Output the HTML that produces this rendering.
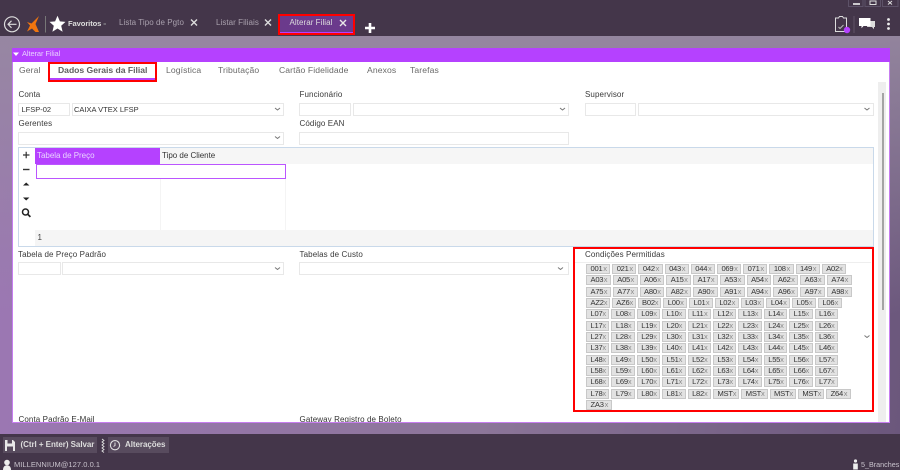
<!DOCTYPE html>
<html lang="pt"><head><meta charset="utf-8"><title>Alterar Filial</title>
<style>
*{box-sizing:border-box}
html,body{margin:0;padding:0;width:900px;height:470px;overflow:hidden;background:#44364a}
body{font-family:"Liberation Sans",sans-serif;font-size:8px;color:#444}
#w{position:relative;width:900px;height:470px;overflow:hidden;filter:blur(.3px)}
.a{position:absolute}
.t{position:absolute;white-space:nowrap;line-height:10px}
.l{color:#3a3a3a;font-size:8px;letter-spacing:.1px}
.i{position:absolute;background:#fff;border:1px solid #e8e8e8;height:13px}
.n{position:absolute;white-space:nowrap;font-size:8.6px;line-height:12px;top:64px;color:#6a6a6a;letter-spacing:.1px}
.r{position:absolute;border:2px solid #f00}
.row{position:absolute;left:586px;height:10px;display:flex;gap:2px}
.g{display:flex;justify-content:space-between;height:10px;width:23.4px;padding:0 2.5px 0 3.5px;background:#e2e2e2;border:1px solid #c8c8c8;color:#333;font-size:7.6px;line-height:8.5px;letter-spacing:-.25px}
.g i{font-style:normal;color:#8a8a8a;font-size:7.5px;line-height:8px}
.w1 .g{width:24.2px}.w2 .g{width:24.77px}.w4 .g{width:23.77px}
.g.m{width:26.3px}.g.z{width:24.6px}
</style></head><body><div id="w">
<div class="a" style="left:0;top:36px;width:900px;height:398px;background:linear-gradient(180deg,rgba(150,136,160,.9) 0,rgba(150,136,160,0) 70%),linear-gradient(95deg,#9c77b4 0,#8c7699 55%,#6b577c 100%)"></div>
<div class="a" style="left:0;top:0;width:900px;height:36px;background:#44364a"></div>
<div class="a" style="left:0;top:434px;width:900px;height:36px;background:#44364a"></div>

<!-- top bar -->
<svg class="a" style="left:0;top:0" width="900" height="40" viewBox="0 0 900 40" fill="none">
<circle cx="12" cy="24.3" r="7.5" stroke="#ddd" stroke-width="1.2"/>
<path d="M16.5 24.3H8M11.5 20.8L8 24.3l3.5 3.5" stroke="#ddd" stroke-width="1.1"/>
<path d="M39 16l-7.5 7.5L27 22l3 3.5L27 31.5l5-3 3.5 3.5H39l-3.5-8z" fill="#f0750f"/>
<path d="M45.5 16v16.5" stroke="#777"/>
<path d="M57.5 15.8l2.4 5.6 5.6.5-4.3 3.8 1.4 6-5.1-3.2-5.1 3.2 1.4-6-4.3-3.8 5.6-.5z" fill="#fff"/>
<path d="M191 19.5l6 6M197 19.5l-6 6M265 19.5l6 6M271 19.5l-6 6" stroke="#ddd" stroke-width="1.4"/>
<path d="M835.5 18h3l1-1.5h3l1 1.5h3v13.5h-11z" stroke="#ddd" stroke-width="1"/>
<path d="M838.5 27l1.5 1.5 3.5-3.5" stroke="#bbb"/>
<circle cx="847" cy="30" r="3.2" fill="#b541ff"/>
<path d="M854 16v17" stroke="#5f5265"/>
<path d="M868 21h7v6h-1v2.2l-2-2.2h-5z" fill="#ddd"/>
<path d="M859 18h11.5v8h-7l-2 2.2V26H859z" fill="#fff"/>
<circle cx="888.5" cy="19.5" r="1.4" fill="#eee"/><circle cx="888.5" cy="24" r="1.4" fill="#eee"/><circle cx="888.5" cy="28.5" r="1.4" fill="#eee"/>
<path d="M848.5 0v6.5h14.5V0M865 0v6.5h15.5V0M882.5 0v6.5h15.5V0" stroke="#5d5268"/>
<path d="M853 4h7" stroke="#eee" stroke-width="1.6"/>
<rect x="870" y="1" width="6" height="3.5" stroke="#ddd"/>
<path d="M888 1l4 3.5M892 1l-4 3.5" stroke="#ddd"/>
<path d="M103.5 24h2.5" stroke="#999"/>
</svg>
<div class="t" style="left:68px;top:18.5px;color:#ddd;font-size:7.6px;font-weight:bold;letter-spacing:-.1px">Favoritos</div>
<div class="t" style="left:119px;top:17.5px;color:#a9a0ad;font-size:8px;letter-spacing:.05px">Lista Tipo de Pgto</div>
<div class="t" style="left:216px;top:17.5px;color:#a9a0ad;font-size:8px;letter-spacing:.05px">Listar Filiais</div>

<div class="a" style="left:279px;top:14.5px;width:74px;height:19.5px;background:#6b3a8c"></div>
<div class="a" style="left:279px;top:31.5px;width:74px;height:2.5px;background:#b541ff"></div>
<div class="t" style="left:289.5px;top:17.5px;color:#ddd;font-size:8px;letter-spacing:.05px">Alterar Filial</div>
<svg class="a" style="left:339px;top:19px" width="8" height="8"><path d="M1 1l6 6M7 1L1 7" stroke="#e8e8e8" stroke-width="1.4"/></svg>
<div class="r" style="left:278px;top:13.5px;width:76.5px;height:21.5px"></div>
<svg class="a" style="left:364px;top:22px" width="12" height="12"><path d="M6 1v10M1 6h10" stroke="#fff" stroke-width="2.6"/></svg>

<!-- panel -->
<div class="a" style="left:11.5px;top:48px;width:878px;height:374.5px;background:#fff;border:1px solid #c77df0;border-top:0"></div>
<div class="a" style="left:11.5px;top:48px;width:878px;height:13.5px;background:#b541ff"></div>
<svg class="a" style="left:13px;top:51.5px" width="6" height="5"><path d="M0 .5h6L3 4z" fill="#fff"/></svg>
<div class="t" style="left:22px;top:48.5px;color:#e8d0ff;font-size:7.5px;letter-spacing:-.1px">Alterar Filial</div>

<div class="n" style="left:19px">Geral</div>
<div class="n" style="left:58px;font-weight:bold;color:#5e5e5e;letter-spacing:-.02px">Dados Gerais da Filial</div>
<div class="n" style="left:166px">Logística</div>
<div class="n" style="left:218px">Tributação</div>
<div class="n" style="left:279px">Cartão Fidelidade</div>
<div class="n" style="left:367px">Anexos</div>
<div class="n" style="left:410px">Tarefas</div>
<div class="a" style="left:49px;top:77.5px;width:107px;height:2px;background:#b541ff"></div>
<div class="r" style="left:47.5px;top:61.5px;width:109.5px;height:20px"></div>

<!-- scrollbar -->
<div class="a" style="left:878px;top:82px;width:8px;height:340px;background:#eee"></div>
<div class="a" style="left:881.5px;top:93px;width:2.5px;height:217px;background:#a4a4a4"></div>

<!-- form row 1 -->
<div class="t l" style="left:18.5px;top:90px">Conta</div>
<div class="i" style="left:18px;top:103px;width:51.5px"></div>
<div class="t" style="left:21.5px;top:104.5px;font-size:7.5px;color:#333">LFSP-02</div>
<div class="i" style="left:71.5px;top:103px;width:212px"></div>
<div class="t" style="left:74px;top:104.5px;font-size:7.5px;color:#333">CAIXA VTEX LFSP</div>
<div class="t l" style="left:299.5px;top:90px">Funcionário</div>
<div class="i" style="left:299px;top:103px;width:51.5px"></div>
<div class="i" style="left:353px;top:103px;width:215.5px"></div>
<div class="t l" style="left:585px;top:90px">Supervisor</div>
<div class="i" style="left:584.5px;top:103px;width:51.5px"></div>
<div class="i" style="left:638px;top:103px;width:235.5px"></div>

<div class="t l" style="left:18.5px;top:119px">Gerentes</div>
<div class="i" style="left:18px;top:131.5px;width:265.5px"></div>
<div class="t l" style="left:299.5px;top:119px">Código EAN</div>
<div class="i" style="left:299px;top:131.5px;width:269.5px"></div>

<!-- grid -->
<div class="a" style="left:18px;top:146.5px;width:856px;height:100.5px;background:#fff;border:1px solid #c9d9ea"></div>
<div class="a" style="left:160px;top:147.5px;width:713px;height:16px;background:#f6f6f6"></div>
<div class="a" style="left:35px;top:147.5px;width:125px;height:16px;background:#b541ff"></div>
<div class="t" style="left:37px;top:151px;font-size:8px;color:#e9d4ff;letter-spacing:-.02px">Tabela de Preço</div>
<div class="t" style="left:162px;top:151px;font-size:8px;color:#333;letter-spacing:-.02px">Tipo de Cliente</div>
<div class="a" style="left:160px;top:164px;width:1px;height:66px;background:#f4f4f4"></div>
<div class="a" style="left:285px;top:164px;width:1px;height:66px;background:#f4f4f4"></div>
<div class="a" style="left:35.5px;top:164px;width:250px;height:15px;background:#fff;border:1.5px solid #bb55ff"></div>
<div class="a" style="left:35px;top:230px;width:838px;height:16px;background:#f5f5f5"></div>
<div class="t" style="left:37.5px;top:232.5px;font-size:8px;color:#444">1</div>
<svg class="a" style="left:18px;top:148px" width="17" height="76" fill="none">
<path d="M5 7h6.5M8.2 3.8v6.5" stroke="#333" stroke-width="1.2"/>
<path d="M5 21.5h6.5" stroke="#333" stroke-width="1.4"/>
<path d="M5 37.5l3.2-3 3.2 3z" fill="#222"/>
<path d="M5 49.5l3.2 3 3.2-3z" fill="#222"/>
<circle cx="7.5" cy="64" r="3" stroke="#222" stroke-width="1.5"/><path d="M9.8 66.3l2.6 2.6" stroke="#222" stroke-width="1.7"/>
</svg>

<!-- lower form -->
<div class="t l" style="left:18px;top:250px">Tabela de Preço Padrão</div>
<div class="i" style="left:18px;top:262px;width:42.5px"></div>
<div class="i" style="left:62px;top:262px;width:221.5px"></div>
<div class="t l" style="left:299.5px;top:250px">Tabelas de Custo</div>
<div class="i" style="left:299px;top:262px;width:269.5px"></div>

<!-- chevrons -->
<svg class="a" style="left:0;top:0" width="900" height="470" fill="none" stroke="#777" stroke-width="1">
<path d="M275 108l2.5 2 2.5-2M560 108l2.5 2 2.5-2M864.5 108l2.5 2 2.5-2M275 136.5l2.5 2 2.5-2M275 267.5l2.5 2 2.5-2M558 267.5l2.5 2 2.5-2M864.5 335.5l2.5 2 2.5-2"/>
</svg>

<!-- Condicoes -->
<div class="t l" style="left:585px;top:250px">Condições Permitidas</div>
<div class="a" style="left:575px;top:262px;width:296px;height:1px;background:#eee"></div>
<div class="row w1" style="top:264px"><span class="g">001<i>x</i></span><span class="g">021<i>x</i></span><span class="g">042<i>x</i></span><span class="g">043<i>x</i></span><span class="g">044<i>x</i></span><span class="g">069<i>x</i></span><span class="g">071<i>x</i></span><span class="g">108<i>x</i></span><span class="g">149<i>x</i></span><span class="g">A02<i>x</i></span></div>
<div class="row w2" style="top:275.3px"><span class="g">A03<i>x</i></span><span class="g">A05<i>x</i></span><span class="g">A06<i>x</i></span><span class="g">A15<i>x</i></span><span class="g">A17<i>x</i></span><span class="g">A53<i>x</i></span><span class="g">A54<i>x</i></span><span class="g">A62<i>x</i></span><span class="g">A63<i>x</i></span><span class="g">A74<i>x</i></span></div>
<div class="row w2" style="top:286.7px"><span class="g">A75<i>x</i></span><span class="g">A77<i>x</i></span><span class="g">A80<i>x</i></span><span class="g">A82<i>x</i></span><span class="g">A90<i>x</i></span><span class="g">A91<i>x</i></span><span class="g">A94<i>x</i></span><span class="g">A96<i>x</i></span><span class="g">A97<i>x</i></span><span class="g">A98<i>x</i></span></div>
<div class="row w4" style="top:298px"><span class="g">AZ2<i>x</i></span><span class="g">AZ6<i>x</i></span><span class="g">B02<i>x</i></span><span class="g">L00<i>x</i></span><span class="g">L01<i>x</i></span><span class="g">L02<i>x</i></span><span class="g">L03<i>x</i></span><span class="g">L04<i>x</i></span><span class="g">L05<i>x</i></span><span class="g">L06<i>x</i></span></div>
<div class="row" style="top:309.3px"><span class="g">L07<i>x</i></span><span class="g">L08<i>x</i></span><span class="g">L09<i>x</i></span><span class="g">L10<i>x</i></span><span class="g">L11<i>x</i></span><span class="g">L12<i>x</i></span><span class="g">L13<i>x</i></span><span class="g">L14<i>x</i></span><span class="g">L15<i>x</i></span><span class="g">L16<i>x</i></span></div>
<div class="row" style="top:320.7px"><span class="g">L17<i>x</i></span><span class="g">L18<i>x</i></span><span class="g">L19<i>x</i></span><span class="g">L20<i>x</i></span><span class="g">L21<i>x</i></span><span class="g">L22<i>x</i></span><span class="g">L23<i>x</i></span><span class="g">L24<i>x</i></span><span class="g">L25<i>x</i></span><span class="g">L26<i>x</i></span></div>
<div class="row" style="top:332px"><span class="g">L27<i>x</i></span><span class="g">L28<i>x</i></span><span class="g">L29<i>x</i></span><span class="g">L30<i>x</i></span><span class="g">L31<i>x</i></span><span class="g">L32<i>x</i></span><span class="g">L33<i>x</i></span><span class="g">L34<i>x</i></span><span class="g">L35<i>x</i></span><span class="g">L36<i>x</i></span></div>
<div class="row" style="top:343.3px"><span class="g">L37<i>x</i></span><span class="g">L38<i>x</i></span><span class="g">L39<i>x</i></span><span class="g">L40<i>x</i></span><span class="g">L41<i>x</i></span><span class="g">L42<i>x</i></span><span class="g">L43<i>x</i></span><span class="g">L44<i>x</i></span><span class="g">L45<i>x</i></span><span class="g">L46<i>x</i></span></div>
<div class="row" style="top:354.7px"><span class="g">L48<i>x</i></span><span class="g">L49<i>x</i></span><span class="g">L50<i>x</i></span><span class="g">L51<i>x</i></span><span class="g">L52<i>x</i></span><span class="g">L53<i>x</i></span><span class="g">L54<i>x</i></span><span class="g">L55<i>x</i></span><span class="g">L56<i>x</i></span><span class="g">L57<i>x</i></span></div>
<div class="row" style="top:366px"><span class="g">L58<i>x</i></span><span class="g">L59<i>x</i></span><span class="g">L60<i>x</i></span><span class="g">L61<i>x</i></span><span class="g">L62<i>x</i></span><span class="g">L63<i>x</i></span><span class="g">L64<i>x</i></span><span class="g">L65<i>x</i></span><span class="g">L66<i>x</i></span><span class="g">L67<i>x</i></span></div>
<div class="row" style="top:377.3px"><span class="g">L68<i>x</i></span><span class="g">L69<i>x</i></span><span class="g">L70<i>x</i></span><span class="g">L71<i>x</i></span><span class="g">L72<i>x</i></span><span class="g">L73<i>x</i></span><span class="g">L74<i>x</i></span><span class="g">L75<i>x</i></span><span class="g">L76<i>x</i></span><span class="g">L77<i>x</i></span></div>
<div class="row" style="top:388.7px"><span class="g">L78<i>x</i></span><span class="g">L79<i>x</i></span><span class="g">L80<i>x</i></span><span class="g">L81<i>x</i></span><span class="g">L82<i>x</i></span><span class="g m">MST<i>x</i></span><span class="g m">MST<i>x</i></span><span class="g m">MST<i>x</i></span><span class="g m">MST<i>x</i></span><span class="g z">Z64<i>x</i></span></div>
<div class="row" style="top:400px"><span class="g" style="width:25.6px">ZA3<i>x</i></span></div>
<div class="r" style="left:573px;top:246.5px;width:300.5px;height:165px"></div>

<div class="a" style="left:12.5px;top:414px;width:865px;height:8px;overflow:hidden">
<div class="t l" style="left:6px;top:.5px;font-size:8px;color:#333">Conta Padrão E-Mail</div>
<div class="t l" style="left:287px;top:.5px;font-size:8px;color:#333">Gateway Registro de Boleto</div>
</div>

<!-- bottom -->
<div class="a" style="left:3px;top:437px;width:94px;height:15.5px;background:#584b5e"></div>
<div class="a" style="left:107.5px;top:437px;width:61px;height:15.5px;background:#584b5e"></div>
<svg class="a" style="left:0;top:434px" width="130" height="36" fill="none">
<path d="M5 6h8l2 2v9H5z" fill="#e8e8e8"/><path d="M7.5 6h4.5v3.5H7.5zM7 12.5h6V17H7z" fill="#584b5e"/>
<path d="M102 5l2 1.5-2 1.5 2 1.5-2 1.5 2 1.5-2 1.5 2 1.5-2 1.5 2 1.5" stroke="#ddd" stroke-width=".9"/>
<circle cx="115" cy="11.2" r="4.6" stroke="#e0e0e0" stroke-width="1.1"/><path d="M115 8.5v3l-1.5 1" stroke="#e0e0e0"/>
<circle cx="7" cy="28.5" r="2.8" fill="#eee"/><path d="M3 36c0-3 1.5-4.8 4-4.8S11 33 11 36z" fill="#eee"/>
</svg>
<div class="t" style="left:20.5px;top:440px;color:#ddd;font-size:8px;font-weight:bold;letter-spacing:-.05px">(Ctrl + Enter) Salvar</div>
<div class="t" style="left:125px;top:440px;color:#ddd;font-size:8px;font-weight:bold;letter-spacing:-.05px">Alterações</div>
<div class="t" style="left:14px;top:459.5px;color:#c8c2cc;font-size:7.5px;letter-spacing:.05px">MILLENNIUM@127.0.0.1</div>
<svg class="a" style="left:852px;top:459px" width="7" height="11"><circle cx="3.5" cy="2" r="1.6" fill="#eee"/><rect x="1.2" y="4.5" width="4.6" height="6" fill="#eee"/></svg>
<div class="t" style="left:861px;top:460px;color:#c8c2cc;font-size:7.2px">5_Branches</div>
</div></body></html>
